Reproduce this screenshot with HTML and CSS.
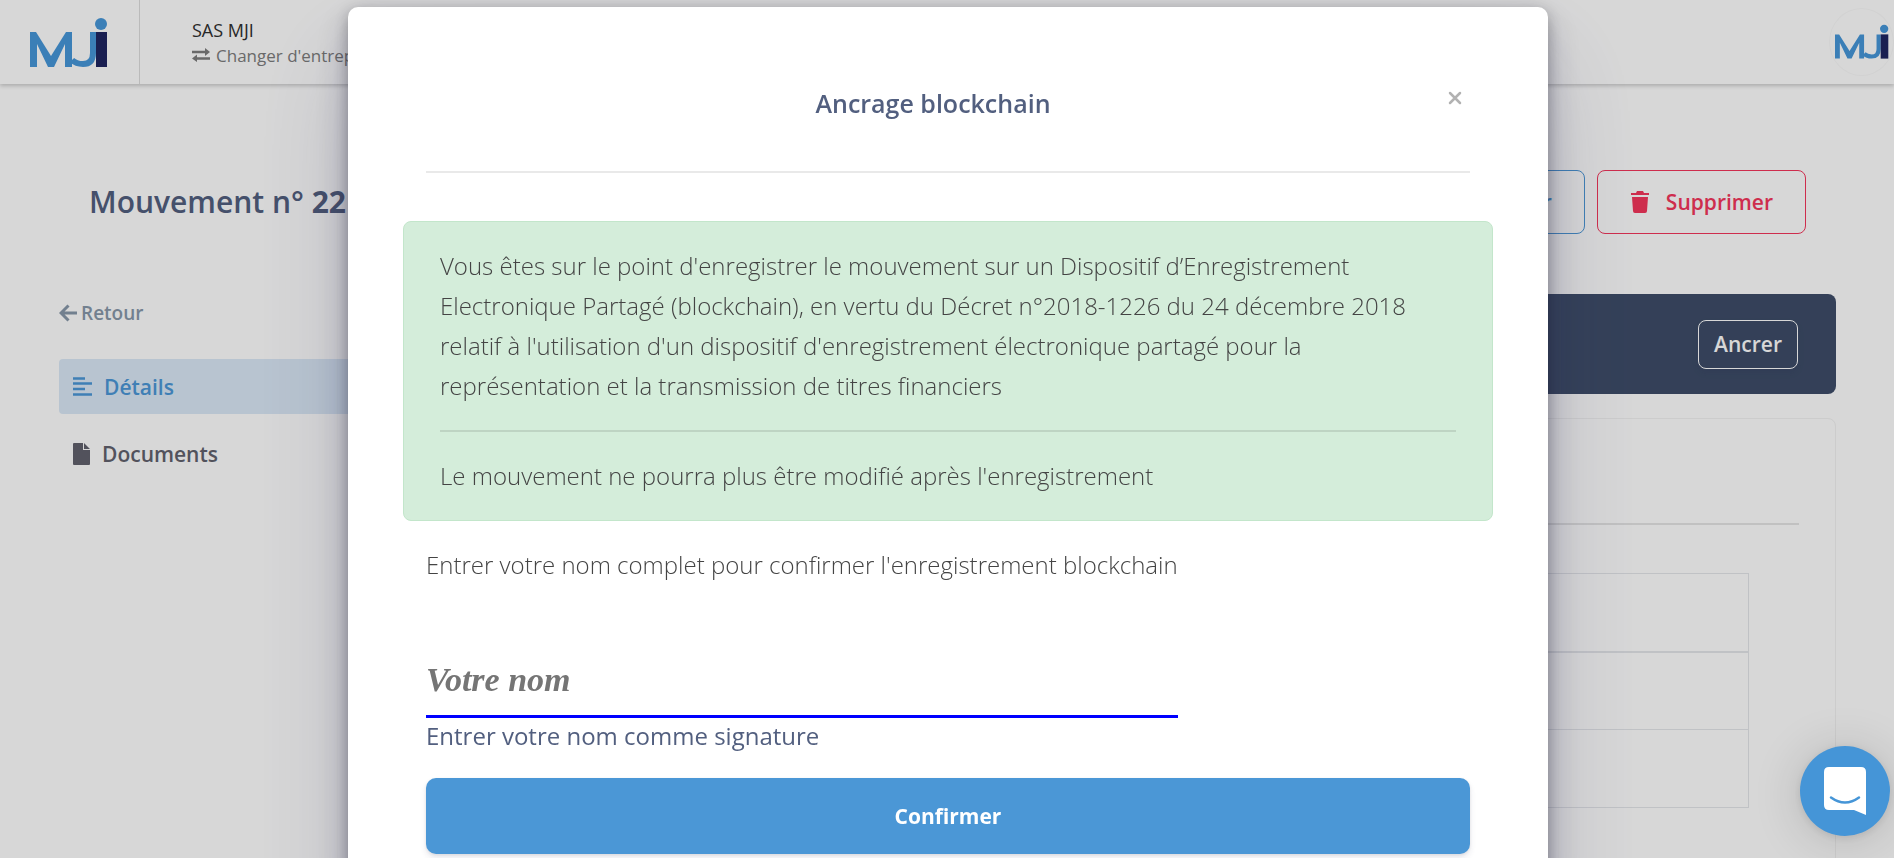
FILE: index.html
```
<!DOCTYPE html>
<html lang="fr">
  <head>
    <meta charset="UTF-8" />
    <meta name="viewport" content="width=device-width, initial-scale=1.0" />
    <title>Mouvement n° 22</title>
    <link rel="stylesheet" href="styles.css">
  </head>
  <body>
    <svg class="sprite" aria-hidden="true">
      <symbol id="logo" viewBox="0 0 78 50">
        <path class="logo-blue" d="M0 49V14h6l15 24 15-24h6v35h-7V26L24 49h-6L7 26v23z" />
        <path class="logo-stroke" d="M42 42q4 4 11 4 10 0 10-11V14" />
        <path class="logo-navy" d="M66 14h11v35H66z" />
        <circle class="logo-blue" cx="71" cy="6" r="6" />
      </symbol>
    </svg>

    <header class="topbar">
      <a class="brand" href="#" aria-label="MJI">
        <svg class="brand-logo"><use href="#logo" /></svg>
      </a>
      <div class="company">
        <span class="company-name">SAS MJI</span>
        <a class="company-switch" href="#">
          <svg width="18" height="14" viewBox="0 0 18 14"><path d="M0 4h14M4 10.500h14" stroke="currentColor" stroke-width="2.500" /><path d="M13 0l5 4-5 4zM5 6.500L0 10.500l5 3.500z" fill="currentColor" /></svg>
          Changer d'entreprise
        </a>
      </div>
      <a class="avatar" href="#" aria-label="Profil">
        <svg class="avatar-logo"><use href="#logo" /></svg>
      </a>
    </header>

    <div class="page">
      <div class="page-head">
        <h1>Mouvement n° <strong>22</strong></h1>
        <div class="page-actions">
          <button class="btn-outline btn-edit" type="button">Modifier</button>
          <button class="btn-outline btn-delete" type="button">
            <svg width="20" height="22" viewBox="0 0 20 22"><path d="M1 2h5l1-2h6l1 2h5v2H1zM2 6h16l-1 14q0 2-2 2H5q-2 0-2-2z" fill="currentColor" /></svg>
            Supprimer
          </button>
        </div>
      </div>

      <div class="columns">
        <nav class="sidebar">
          <a class="back" href="#">
            <svg width="18" height="18" viewBox="0 0 18 18"><path d="M9.500 1.500L2 9l7.500 7.500M2 9h16" fill="none" stroke="currentColor" stroke-width="3" /></svg>
            Retour
          </a>
          <a class="nav-link active" href="#">
            <svg width="19" height="19" viewBox="0 0 19 19"><path d="M0 1.500h12M0 6.500h19M0 12h12M0 17.500h19" stroke="currentColor" stroke-width="2.600" /></svg>
            Détails
          </a>
          <a class="nav-link" href="#">
            <svg width="17" height="22" viewBox="0 0 17 22"><path d="M0 1q0-1 1-1h9v7h7v14q0 1-1 1H1q-1 0-1-1zM11 0l6 6h-6z" fill="currentColor" /></svg>
            Documents
          </a>
        </nav>
        <main class="content">
          <div class="anchor-bar">
            <button class="btn-anchor" type="button">Ancrer</button>
          </div>
          <section class="card">
            <hr>
            <table class="details">
              <thead><tr><th></th></tr></thead>
              <tbody><tr><td></td></tr><tr><td></td></tr></tbody>
            </table>
          </section>
        </main>
      </div>
    </div>

    <div class="backdrop">
      <div class="modal" role="dialog" aria-modal="true" aria-labelledby="modalTitle">
        <div class="modal-header">
          <h2 id="modalTitle">Ancrage blockchain</h2>
          <button class="close" type="button" aria-label="Fermer">
            <svg width="14" height="14" viewBox="0 0 14 14"><path d="M2 2l10 10M12 2L2 12" stroke="currentColor" stroke-width="2.500" stroke-linecap="round" /></svg>
          </button>
        </div>
        <div class="alert">
          <p>Vous êtes sur le point d'enregistrer le mouvement sur un Dispositif d’Enregistrement Electronique Partagé (blockchain), en vertu du Décret n°2018-1226 du 24 décembre 2018 relatif à l'utilisation d'un dispositif d'enregistrement électronique partagé pour la représentation et la transmission de titres financiers</p>
          <hr>
          <p>Le mouvement ne pourra plus être modifié après l'enregistrement</p>
        </div>
        <form>
          <div class="signature">
            <p>Entrer votre nom complet pour confirmer l'enregistrement blockchain</p>
            <input type="text" id="signature" placeholder="Votre nom" required />
            <label for="signature">Entrer votre nom comme signature</label>
          </div>
          <button class="btn-confirm" type="submit">Confirmer</button>
        </form>
      </div>
    </div>

    <button class="chat" type="button" aria-label="Ouvrir le chat">
      <svg width="42" height="48" viewBox="0 0 42 48"><path d="M5 0h32q5 0 5 5v43l-12-5H5q-5 0-5-5V5q0-5 5-5z" fill="#fff" /><path d="M7 30.500q14 10 28 0" fill="none" stroke="#4595d7" stroke-width="2.500" stroke-linecap="round" /></svg>
    </button>
  </body>
</html>
```
FILE: styles.css
```
* {
  box-sizing: border-box;
}
body {
  margin: 0;
  min-height: 100vh;
  overflow: hidden;
  font-family: "Open Sans", sans-serif;
  font-size: 21px;
  color: #525f7f;
  background: #fff;
}
a {
  text-decoration: none;
}
button {
  font-family: inherit;
  cursor: pointer;
}
hr {
  margin: 0;
  border: 0;
  border-top: 2px solid rgba(0, 0, 0, 0.1);
}
.sprite {
  position: absolute;
  width: 0;
  height: 0;
}
.logo-blue {
  fill: #4797d9;
}
.logo-navy {
  fill: #1f2560;
}
.logo-stroke {
  fill: none;
  stroke: #4797d9;
  stroke-width: 6;
}

/* top bar */
.topbar {
  display: flex;
  align-items: center;
  height: 84px;
  box-shadow: 0 2px 4px rgba(0, 0, 0, 0.2);
}
.brand {
  display: flex;
  align-items: center;
  height: 84px;
  padding: 2px 31px 0 30px;
  border-right: 1px solid #ddd;
}
.brand-logo {
  width: 78px;
  height: 50px;
}
.company {
  display: flex;
  flex-direction: column;
  margin-left: 52px;
  padding-top: 1px;
  font-weight: 500;
  line-height: 25px;
}
.company-name {
  font-size: 18px;
  color: #303030;
}
.company-switch {
  display: flex;
  align-items: center;
  gap: 6px;
  font-size: 17px;
  color: #7d7d7d;
}
.avatar {
  display: flex;
  align-items: center;
  justify-content: center;
  width: 65px;
  height: 68px;
  margin-left: auto;
  border: 1px solid #fafafa;
  border-radius: 50%;
}
.avatar-logo {
  width: 54px;
  height: 36px;
}

/* page */
.page {
  padding: 86px 58px 0 59px;
}
.page-head {
  display: flex;
  align-items: center;
  justify-content: space-between;
  padding: 0 30px;
}
h1 {
  margin: 0;
  font-size: 30px;
  font-weight: 600;
  line-height: 40px;
}
h1 strong {
  font-weight: 700;
}
.page-actions {
  display: flex;
  gap: 12px;
}
.btn-outline {
  display: flex;
  align-items: center;
  gap: 16px;
  height: 64px;
  padding: 0 32px;
  font-size: 21px;
  font-weight: 600;
  background: transparent;
  border: 1px solid currentColor;
  border-radius: 8px;
}
.btn-edit {
  color: #4b97d7;
}
.btn-delete {
  color: #f5365c;
}
.columns {
  display: grid;
  grid-template-columns: 1fr 3fr;
  gap: 30px;
  margin-top: 60px;
}
.sidebar {
  display: flex;
  flex-direction: column;
}
.back {
  display: flex;
  align-items: center;
  gap: 4px;
  height: 38px;
  margin-bottom: 27px;
  font-size: 19px;
  font-weight: 600;
  color: #8898aa;
}
.nav-link {
  display: flex;
  align-items: center;
  gap: 12px;
  height: 55px;
  margin-bottom: 12px;
  padding: 0 14px;
  font-weight: 600;
  color: #62626e;
  border-radius: 4px;
}
.nav-link.active {
  color: #4b97d7;
  background: #dbe9f7;
}
.anchor-bar {
  display: flex;
  align-items: center;
  justify-content: flex-end;
  height: 100px;
  padding: 0 38px;
  background: #3e4d69;
  border-radius: 8px;
}
.btn-anchor {
  height: 49px;
  padding: 0 15px;
  font-size: 21px;
  font-weight: 600;
  color: #fff;
  background: transparent;
  border: 1px solid #fff;
  border-radius: 8px;
  box-shadow: 0 4px 6px rgba(50, 50, 93, 0.11);
}
.card {
  height: 600px;
  margin-top: 24px;
  padding: 104px 36px 0;
  border: 1px solid #f2f2f2;
  border-radius: 8px;
}
.details {
  width: calc(100% - 50px);
  margin-top: 48px;
  border-collapse: collapse;
}
.details th,
.details td {
  height: 78px;
  padding: 0;
  border: 1px solid #e4e6ea;
}
.details th {
  border-bottom-width: 2px;
}

/* modal */
.backdrop {
  position: fixed;
  inset: 0;
  overflow: hidden;
  padding: 7px 0 0 2px;
  background: rgba(0, 0, 0, 0.157);
}
.modal {
  max-width: 1200px;
  margin: 0 auto;
  padding: 0 78px 60px;
  background: #fff;
  border-radius: 10px;
  box-shadow: 0 50px 100px rgba(50, 50, 93, 0.2),
    0 15px 35px rgba(50, 50, 93, 0.25), 0 5px 15px rgba(0, 0, 0, 0.3);
}
.modal-header {
  display: flex;
  align-items: flex-start;
  height: 166px;
  padding-top: 76px;
  border-bottom: 2px solid #e9e9e9;
}
h2 {
  flex: 1;
  margin: 0;
  font-size: 25px;
  font-weight: 600;
  line-height: 40px;
  text-align: center;
}
.close {
  display: flex;
  padding: 8px;
  color: #b2b2b2;
  background: none;
  border: none;
}
.alert {
  margin: 48px -23px 24px;
  padding: 24px 36px;
  background: #d4edda;
  border: 1px solid #c3e6cb;
  border-radius: 8px;
}
.alert p,
.signature p {
  margin: 0;
  font-size: 24px;
  font-weight: 300;
  line-height: 40px;
  color: #444;
}
.alert hr {
  margin: 24px 0;
}
.signature {
  display: inline-flex;
  flex-direction: column;
  font-size: 24px;
}
.signature input {
  width: 100%;
  height: 73px;
  margin-top: 60px;
  padding: 0;
  font: italic bold 34px "Brush Script MT", "Liberation Serif", cursive;
  border: none;
  border-bottom: 3px solid blue;
  outline: none;
}
.signature input::placeholder {
  color: #757575;
}
.signature label {
  line-height: 36px;
}
.btn-confirm {
  display: block;
  width: 100%;
  height: 76px;
  margin-top: 24px;
  font-size: 21px;
  font-weight: 700;
  color: #fff;
  background: #4b97d6;
  border: none;
  border-radius: 10px;
  box-shadow: 0 4px 6px rgba(50, 50, 93, 0.11), 0 1px 3px rgba(0, 0, 0, 0.08);
}

/* chat */
.chat {
  position: fixed;
  right: 4px;
  bottom: 22px;
  display: flex;
  align-items: center;
  justify-content: center;
  width: 90px;
  height: 90px;
  background: #4595d7;
  border: none;
  border-radius: 50%;
  box-shadow: 0 2px 10px rgba(0, 0, 0, 0.1), 0 4px 50px rgba(0, 0, 0, 0.16);
}
```
